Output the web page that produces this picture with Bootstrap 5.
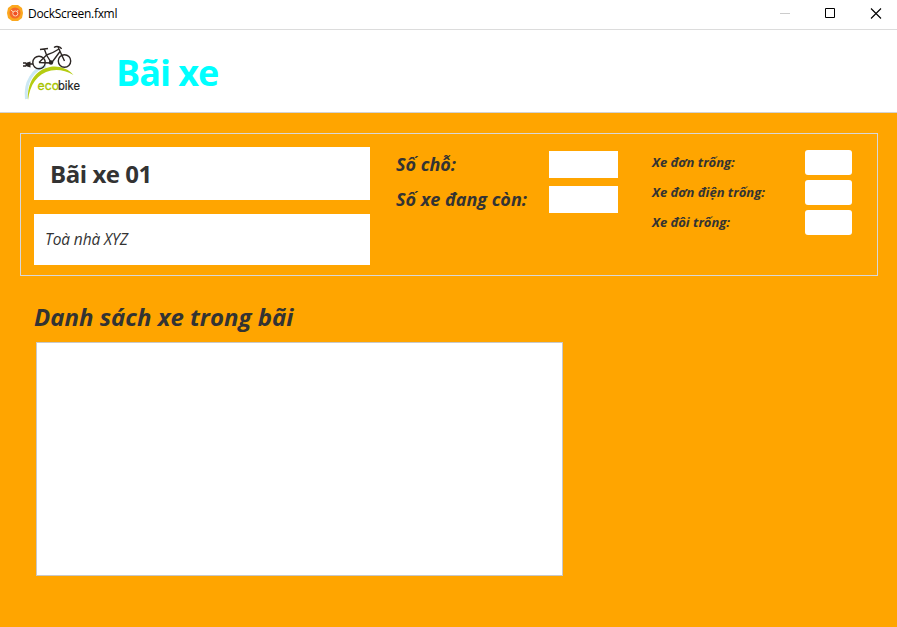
<!DOCTYPE html>
<html lang="vi">
<head>
<meta charset="utf-8">
<meta name="viewport" content="width=device-width, initial-scale=1">
<title>DockScreen.fxml</title>
<link href="https://cdn.jsdelivr.net/npm/bootstrap@5.3.0/dist/css/bootstrap.min.css" rel="stylesheet">
<style>
body{font-family:"Open Sans","Noto Sans",sans-serif;color:#333;background:#ffa500;height:627px;overflow:hidden}
.titlebar{height:30px;border-bottom:1px solid #dcdcdc;padding:0 15px 3px 7px;font-size:12px;color:#000}
.titlebar .caption{letter-spacing:-.3px;margin-left:5px;padding-top:1px}
.win-controls{gap:35px}
.app-header{height:83px;border-bottom:1px solid #d3d3d3;padding:14px 22px 0}
.app-title{font-size:36px;line-height:50px;color:#0ff;margin:4px 0 0 34px;letter-spacing:-1px}
.dock-info{margin:20px 19px 0 20px;height:143px;border:1px solid #d8d8d8;padding:13px}
.dock-fields{width:336px;gap:14px}
.dock-name{height:53px;font-size:24px;padding-left:16px;letter-spacing:-.45px}
.dock-address{height:51px;font-size:15.5px;padding-left:11px;letter-spacing:-.1px}
.totals{margin:4px 0 0 26px;width:222px;gap:8px;font-size:18px}
.totals .line{height:27px}
.totals output{width:69px;height:27px}
.types{margin:3px 0 0 34px;width:200px;gap:5px;font-size:13px}
.types .line{height:25px}
.types output{width:47px;height:25px;border-radius:3px}
.list-title{font-size:24px;line-height:34px;margin:24px 0 0 34px}
.bike-list{width:527px;height:234px;border:1px solid #c8c8c8;margin:8px 0 0 36px}
</style>
</head>
<body>
<div class="titlebar bg-white d-flex align-items-center justify-content-between">
  <div class="d-flex align-items-center">
    <svg width="16" height="16" viewBox="0 0 16 16"><path d="M5 0h6l4 3 1 5-1 5-4 3H5l-4-3-1-5 1-5z" fill="#fba81f"/><circle cx="8" cy="8" r="5.500" fill="#f4692a"/><circle cx="8.300" cy="8.500" r="2.500" fill="#f04e23" stroke="#ffd9b8"/><path d="M4 5l2.300 2M11 5l-1 1.600" stroke="#ffd9b8"/></svg>
    <span class="caption">DockScreen.fxml</span>
  </div>
  <div class="win-controls d-flex align-items-center">
    <svg width="10" height="11" viewBox="0 0 10 11"><path d="M0 5.500h10" stroke="#ccc"/></svg>
    <svg width="10" height="10" viewBox="0 0 10 10"><path d="M.5.5h9v9h-9z" fill="none" stroke="#000"/></svg>
    <svg width="12" height="11" viewBox="0 0 12 11"><path d="M1 .5l10 10M11 .5l-10 10" stroke="#000" stroke-width="1.100"/></svg>
  </div>
</div>
<header class="app-header bg-white d-flex align-items-start">
  <svg width="60" height="58" viewBox="0 0 60 58" fill="none">
    <path d="M4.500 55C2.500 38 11 25 24 22" stroke="#cce8f4" stroke-width="3"/>
    <path d="M6 56C5 39 13 25.500 29 22.800c9-1 17 2 22.500 8.200C44 26.500 36 25 29 26.500 15 29.500 8 41 6 56z" fill="#b5cc12"/>
    <g stroke="#2c2624" stroke-width="1.400">
      <circle cx="17" cy="18.500" r="6.200"/><circle cx="42.500" cy="17" r="6.200"/>
      <path d="M17 18.500l7.500-7.500 5 8L38 7.500M24.500 11Q31 9 37 5M29 19l-12-.5M22.500 5.500l2 5.500M18 5.500l8-1"/>
      <path d="M35.800 2.500l6.700 14.500M32 3.500q2-1.500 4.500-.8t3 2.300"/>
      <path d="M11 20H7M1 19h3M1 22h3"/>
    </g>
    <path d="M8.500 17.500v6l-5-1.500v-3z" fill="#2c2624"/><circle cx="29" cy="18.500" r="2.200" fill="#2c2624"/>
    <g font-family="Inter,sans-serif" font-size="12.500">
      <text x="15.500" y="46" fill="#a8c400" stroke="#a8c400" stroke-width=".3" textLength="21.500" lengthAdjust="spacingAndGlyphs">eco</text>
      <text x="36" y="46" fill="#222" stroke="#222" stroke-width=".2" textLength="22" lengthAdjust="spacingAndGlyphs">bike</text>
    </g>
  </svg>
  <h1 class="app-title fw-bold text-nowrap">Bãi xe</h1>
</header>
<main>
  <section class="dock-info d-flex align-items-start">
    <div class="dock-fields d-flex flex-column">
      <div class="dock-name bg-white fw-bold d-flex align-items-center">Bãi xe 01</div>
      <div class="dock-address bg-white fst-italic d-flex align-items-center">Toà nhà XYZ</div>
    </div>
    <div class="totals d-flex flex-column fw-bold fst-italic text-nowrap">
      <div class="line d-flex align-items-center justify-content-between"><span>Số chỗ:</span><output class="bg-white"></output></div>
      <div class="line d-flex align-items-center justify-content-between"><span>Số xe đang còn:</span><output class="bg-white"></output></div>
    </div>
    <div class="types d-flex flex-column fw-bold fst-italic text-nowrap">
      <div class="line d-flex align-items-center justify-content-between"><span>Xe đơn trống:</span><output class="bg-white"></output></div>
      <div class="line d-flex align-items-center justify-content-between"><span>Xe đơn điện trống:</span><output class="bg-white"></output></div>
      <div class="line d-flex align-items-center justify-content-between"><span>Xe đôi trống:</span><output class="bg-white"></output></div>
    </div>
  </section>
  <h2 class="list-title fw-bold fst-italic mb-0">Danh sách xe trong bãi</h2>
  <div class="bike-list bg-white"></div>
</main>
<script src="https://cdn.jsdelivr.net/npm/bootstrap@5.3.0/dist/js/bootstrap.bundle.min.js"></script>
</body>
</html>
